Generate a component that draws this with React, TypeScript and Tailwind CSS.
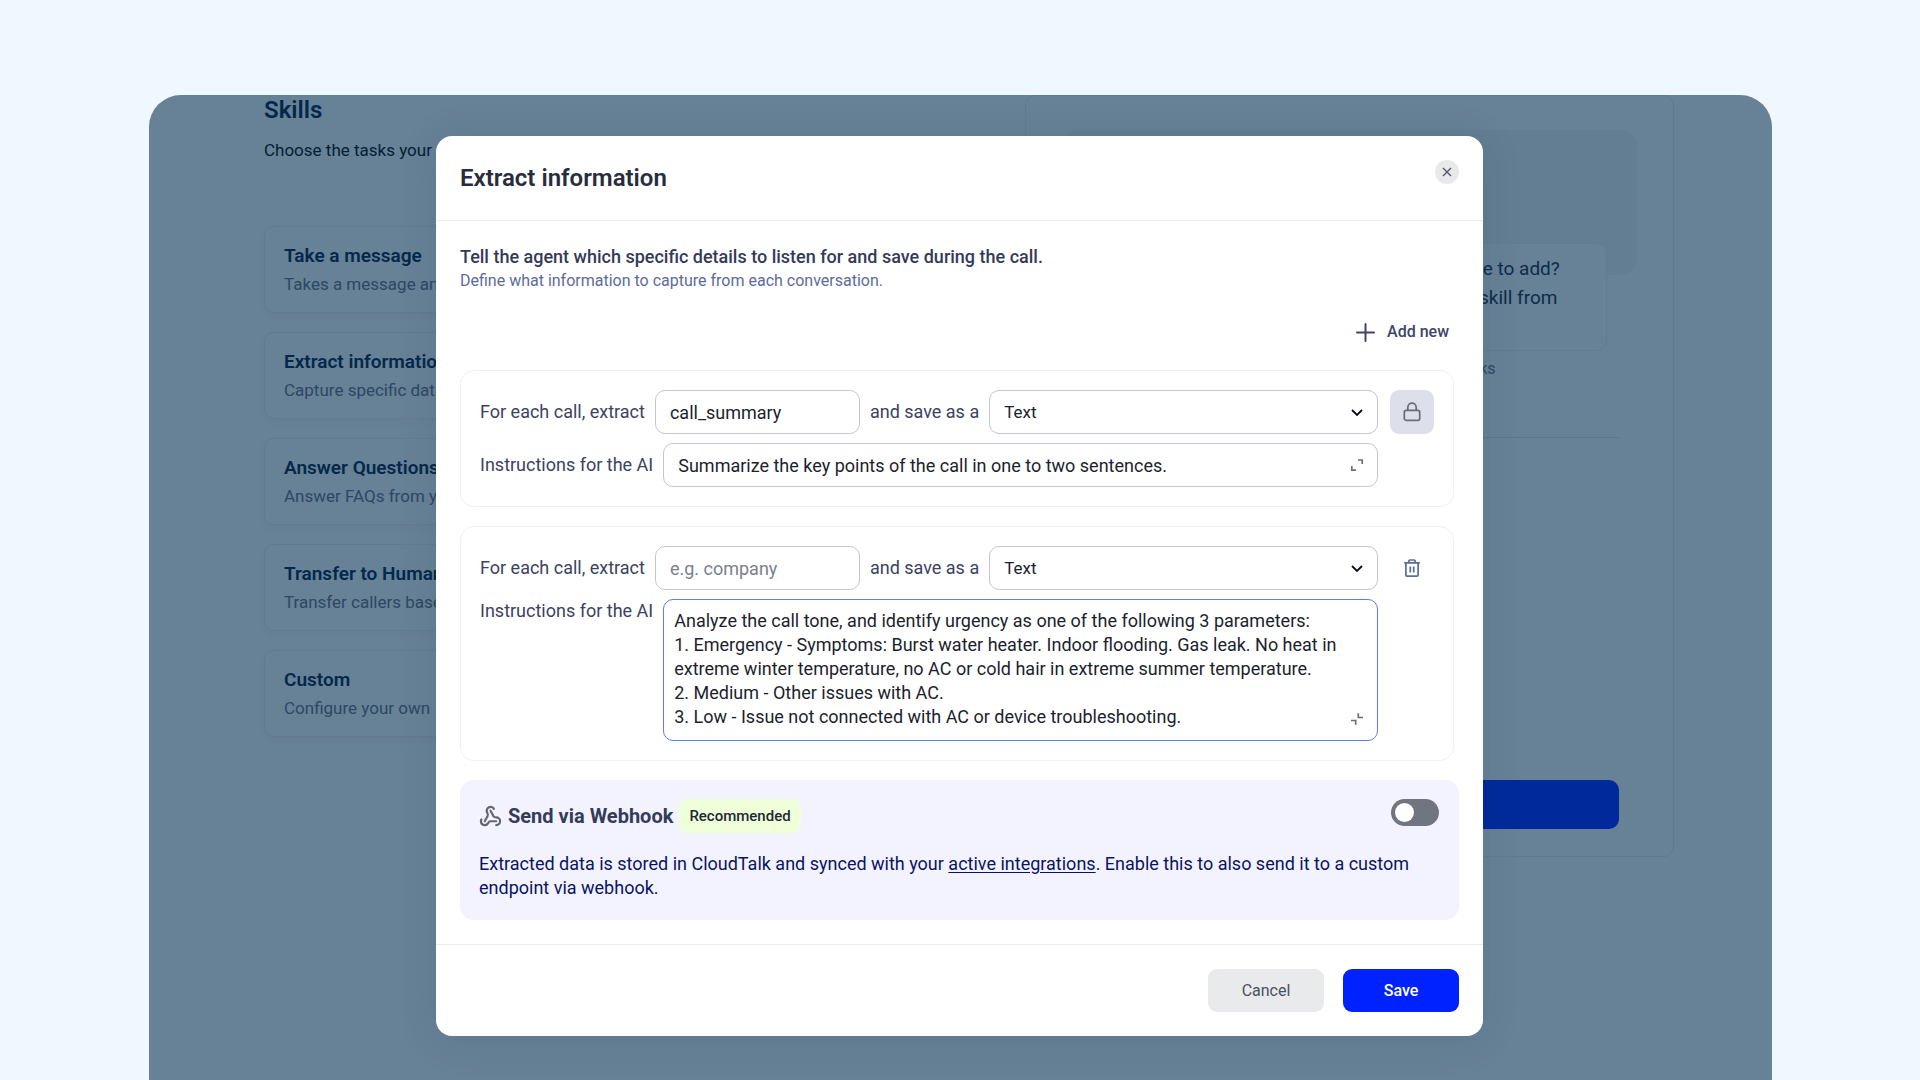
import React from "react";
import { Webhook } from "lucide-react";

const skills = [
  { title: "Take a message", text: "Takes a message and" },
  { title: "Extract information", text: "Capture specific data" },
  { title: "Answer Questions", text: "Answer FAQs from your" },
  { title: "Transfer to Human", text: "Transfer callers based" },
  { title: "Custom", text: "Configure your own" },
];

const urgencyPrompt = `Analyze the call tone, and identify urgency as one of the following 3 parameters:
1. Emergency - Symptoms: Burst water heater. Indoor flooding. Gas leak. No heat in
extreme winter temperature, no AC or cold hair in extreme summer temperature.
2. Medium - Other issues with AC.
3. Low - Issue not connected with AC or device troubleshooting.`;

function ChevronIcon() {
  return (
    <svg className="pointer-events-none absolute top-[15px] right-[14px] size-[14px]" viewBox="0 0 14 14" fill="none" stroke="#0b0d14" strokeWidth="1.8" aria-hidden="true">
      <path d="M2 5 7 10 12 5" />
    </svg>
  );
}

function LockIcon() {
  return (
    <svg className="size-5" viewBox="0 0 20 20" fill="none" stroke="#6b6c76" strokeWidth="1.7" aria-hidden="true">
      <rect x="2.3" y="8.3" width="15.4" height="10" rx="1.8" />
      <path d="M5.8 8.3V5.4a4.2 4.2 0 0 1 8.4 0v2.9" />
    </svg>
  );
}

function TrashIcon() {
  return (
    <svg className="size-5" viewBox="0 0 20 20" fill="none" stroke="#5a6c9e" strokeWidth="1.7" aria-hidden="true">
      <path d="M2.2 4.8h15.6M6.3 4.8l.8-2.2a1 1 0 0 1 .9-.6h4a1 1 0 0 1 .9.6l.8 2.2" />
      <path d="M3.9 4.8v12.1a1.3 1.3 0 0 0 1.3 1.3h9.6a1.3 1.3 0 0 0 1.3-1.3V4.8" />
      <path d="M8.3 8.4v6M11.7 8.4v6" />
    </svg>
  );
}

function ExpandIcon({ collapsed }: { collapsed: boolean }) {
  return (
    <svg className="size-[14px]" viewBox="0 0 14 14" fill="none" stroke="#6d6e78" strokeWidth="1.7" aria-hidden="true">
      {collapsed ? <path d="M8 2h4.2v4M1.8 8v4.2H6" /> : <path d="M8.3 1.2v4.3H13M1 8.5h4.7v4.3" />}
    </svg>
  );
}

type FieldCardProps = {
  id: string;
  name: string;
  locked?: boolean;
  prompt: string;
  multiline?: boolean;
};

function FieldCard({ id, name, locked, prompt, multiline }: FieldCardProps) {
  return (
    <section className="mr-[5px] grid grid-cols-[minmax(0,1fr)_44px] gap-x-3 gap-y-[9px] rounded-[14px] border border-[#f0f0f3] p-[19px] text-[18px] leading-6 text-[#3b4263]">
      <div className="flex items-center gap-[10px]">
        <label htmlFor={`${id}-name`}>For each call, extract</label>
        <input
          id={`${id}-name`}
          defaultValue={name}
          placeholder="e.g. company"
          className="h-11 w-[205px] rounded-[10px] border border-[#c4c5ce] px-[14px] text-[#1b1f2e] placeholder:text-[#7b7f8d]"
        />
        <label htmlFor={`${id}-type`}>and save as a</label>
        <div className="relative flex-1">
          <select
            id={`${id}-type`}
            className="h-11 w-full appearance-none rounded-[10px] border border-[#c4c5ce] bg-white px-[14px] text-[17px] text-[#1b1f2e]"
          >
            <option>Text</option>
          </select>
          <ChevronIcon />
        </div>
      </div>
      {locked ? (
        <button type="button" aria-label="Locked field" className="flex h-11 items-center justify-center rounded-[9px] bg-[#dddfeb]">
          <LockIcon />
        </button>
      ) : (
        <button type="button" aria-label="Delete field" className="flex h-11 items-center justify-center">
          <TrashIcon />
        </button>
      )}
      <div className={multiline ? "flex items-start gap-[10px]" : "flex items-center gap-[10px]"}>
        <label htmlFor={`${id}-prompt`}>Instructions for the AI</label>
        <div className="relative flex flex-1">
          {multiline ? (
            <textarea
              id={`${id}-prompt`}
              defaultValue={prompt}
              rows={5}
              className="w-full resize-none overflow-hidden rounded-[10px] border border-[#5f7bf5] px-[10px] pt-[9px] pb-[11px] text-[#1b1f2e]"
            />
          ) : (
            <input
              id={`${id}-prompt`}
              defaultValue={prompt}
              className="h-11 w-full rounded-[10px] border border-[#c4c5ce] pr-10 pl-[14px] text-[#1b1f2e]"
            />
          )}
          <button
            type="button"
            aria-label={multiline ? "Collapse instructions" : "Expand instructions"}
            className="absolute right-[14px] bottom-[15px]"
          >
            <ExpandIcon collapsed={!multiline} />
          </button>
        </div>
      </div>
    </section>
  );
}

function SkillsPage() {
  return (
    <main className="grid grid-cols-[54fr_46fr] pr-[98px] pl-[115px]">
      <section className="pr-8">
        <h1 className="pt-px text-[24px] leading-7 font-semibold text-[#04284a]">Skills</h1>
        <p className="mt-[14px] text-[17px] leading-6 text-[#041d35]">Choose the tasks your</p>
        <ul className="mt-16 flex flex-col gap-[19px]">
          {skills.map((s) => (
            <li key={s.title} className="h-[87px] rounded-[10px] border border-[#607b91] px-[19px] pt-[17px] shadow-[0_3px_6px_rgba(70,70,110,0.05)]">
              <h2 className="text-[19px] leading-6 font-semibold text-[#04284a]">{s.title}</h2>
              <p className="mt-1 text-[17px] leading-6 text-[#2c4863]">{s.text}</p>
            </li>
          ))}
        </ul>
      </section>
      <aside className="flex h-[762px] flex-col rounded-[10px] border border-[#607b91] pt-[34px] pb-[27px]">
        <div className="mx-9 h-[145px] rounded-2xl bg-[#637d92]" />
        <div className="mr-[66px] -mt-8 h-[108px] w-[170px] self-end rounded-[10px] border border-[#617b91] bg-[#678196] pt-[10px] pl-[26px] text-[19px] leading-[29px] text-[#0d2c4a]">
          <p>like to add?</p>
          <p>a skill from</p>
        </div>
        <p className="mt-[6px] mr-[66px] w-[150px] self-end text-[16px] leading-6 text-[#2c4863]">tasks</p>
        <hr className="mx-[54px] mt-[56px] border-[#5c768b]" />
        <button type="button" aria-label="Continue" className="mx-[54px] mt-auto h-[49px] rounded-[10px] bg-[#002a9b]" />
      </aside>
    </main>
  );
}

function ExtractDialog() {
  return (
    <div
      role="dialog"
      aria-labelledby="dialog-title"
      className="w-full max-w-[1047px] rounded-2xl bg-white shadow-[0_4px_40px_rgba(30,60,90,0.12)]"
    >
      <header className="flex items-start justify-between border-b border-[#ececef] px-6 py-6">
        <h2 id="dialog-title" className="text-[24px] leading-9 font-semibold text-[#272d3d]">
          Extract information
        </h2>
        <button type="button" aria-label="Close" className="flex size-6 items-center justify-center rounded-full bg-[#e8e9eb]">
          <svg className="size-[10px]" viewBox="0 0 10 10" stroke="#555963" strokeWidth="1.4" aria-hidden="true">
            <path d="M1 1l8 8M9 1 1 9" />
          </svg>
        </button>
      </header>
      <div className="flex flex-col px-6 pt-6 pb-6">
        <p className="text-[18px] leading-6 font-medium text-[#333a58]">
          Tell the agent which specific details to listen for and save during the call.
        </p>
        <p className="text-[16px] leading-6 text-[#5d6b9c]">Define what information to capture from each conversation.</p>
        <button type="button" className="mt-[27px] mr-[10px] flex items-center gap-3 self-end text-[16px] leading-6 font-medium text-[#3d4568]">
          <svg className="size-[19px]" viewBox="0 0 19 19" stroke="currentColor" strokeWidth="2" strokeLinecap="round" aria-hidden="true">
            <path d="M9.5 1v17M1 9.5h17" />
          </svg>
          Add new
        </button>
        <div className="mt-[26px] flex flex-col gap-[19px]">
          <FieldCard id="summary" name="call_summary" locked prompt="Summarize the key points of the call in one to two sentences." />
          <FieldCard id="urgency" name="" prompt={urgencyPrompt} multiline />
          <section className="rounded-[14px] bg-[#f3f3ff] px-[19px] pt-[19px] pb-5">
            <div className="flex items-start justify-between pr-px">
              <h3 className="flex items-center gap-[6px] text-[20px] leading-6 font-bold text-[#343c58]">
                <Webhook className="size-[23px]" color="#66676e" strokeWidth={2.3} aria-hidden="true" />
                Send via Webhook
                <span className="rounded-[9px] bg-[#efffd9] px-[10px] py-[5px] text-[15px] leading-6 font-medium text-[#1e2733]">
                  Recommended
                </span>
              </h3>
              <input
                type="checkbox"
                role="switch"
                aria-label="Send via Webhook"
                className="h-[27px] w-12 appearance-none rounded-full bg-[#70757f] p-1 before:block before:size-[19px] before:rounded-full before:bg-white"
              />
            </div>
            <p className="mt-[19px] text-[18px] leading-6 text-[#0a1464]">
              Extracted data is stored in CloudTalk and synced with your{" "}
              <a href="#integrations" className="underline underline-offset-2">
                active integrations
              </a>
              . Enable this to also send it to a custom endpoint via webhook.
            </p>
          </section>
        </div>
      </div>
      <footer className="flex justify-end gap-[19px] border-t border-[#ececef] p-6">
        <button type="button" className="h-[43px] w-[116px] rounded-[9px] bg-[#e9eaec] text-[16px] text-[#4b5060]">
          Cancel
        </button>
        <button type="button" className="h-[43px] w-[116px] rounded-[9px] bg-[#0022ff] text-[16px] font-medium text-white">
          Save
        </button>
      </footer>
    </div>
  );
}

export default function App() {
  return (
    <div className="flex h-screen flex-col overflow-hidden bg-[#f0f8ff] pt-[95px] pr-[148px] pl-[149px] font-[Roboto,sans-serif]">
      <div className="relative flex-1 overflow-hidden rounded-t-[32px] bg-[#678196]">
        <SkillsPage />
        <div className="absolute inset-0 flex items-start justify-center pt-[41px] pr-[2px]">
          <ExtractDialog />
        </div>
      </div>
    </div>
  );
}
